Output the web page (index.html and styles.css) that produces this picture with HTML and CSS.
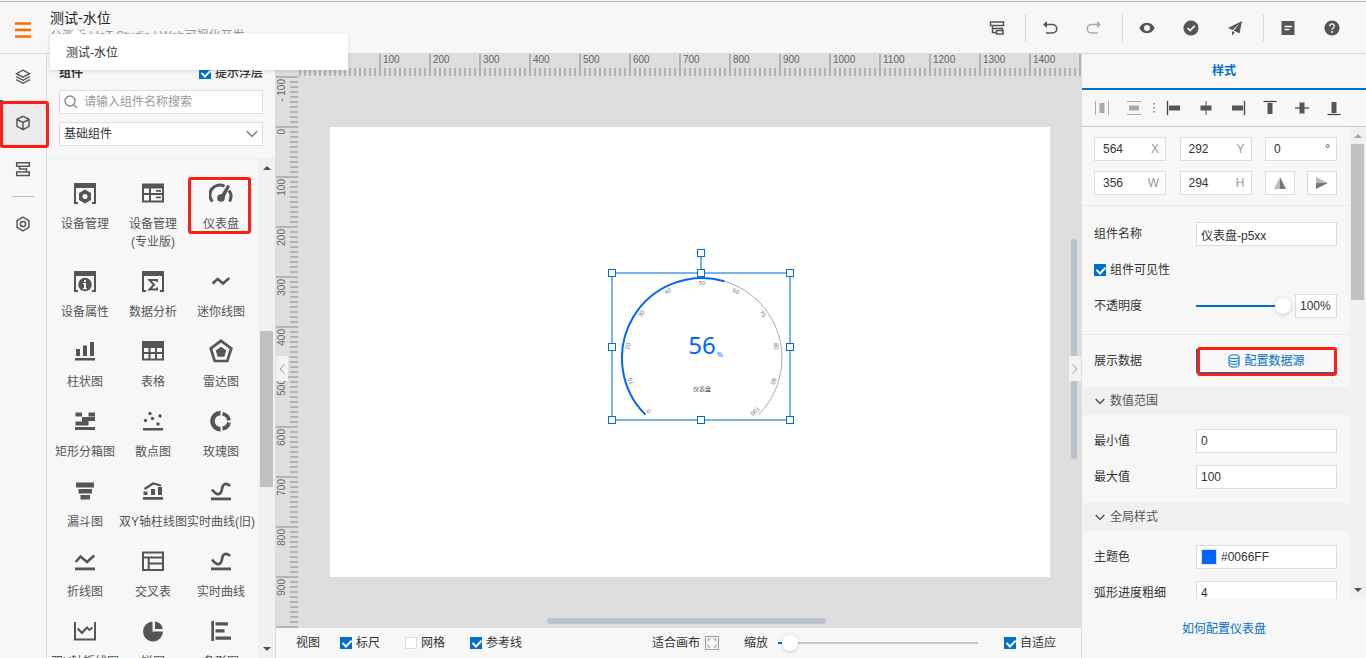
FILE: index.html
```html
<!DOCTYPE html>
<html lang="zh-CN">
<head>
<meta charset="utf-8">
<title>测试-水位</title>
<link rel="stylesheet" href="styles.css">
</head>
<body>
<div class="app">
  <header class="topbar">
    <button class="menu-btn" aria-label="菜单">
      <svg width="16" height="16" viewBox="0 0 16 16"><path d="M0 1.500h16M0 8h16M0 14.500h16" stroke="#ff6a00" stroke-width="2.400"/></svg>
    </button>
    <div class="titles">
      <h1 class="title">测试-水位</h1>
      <p class="subtitle">公测版 | IoT Studio | Web可视化开发</p>
      <div class="tooltip" role="tooltip">测试-水位</div>
    </div>
    <div class="tools">
      <button class="tool" aria-label="结构"><svg class="i16" viewBox="0 0 16 16"><path d="M1.500 2h13v3.500h-13zM7.500 10.500h6.500v3.500h-6.500z" fill="none" stroke="#555" stroke-width="1.500"/><path d="M3.500 5.500v7h4M3.500 8.500h10v2" fill="none" stroke="#555" stroke-width="1.500"/></svg></button>
      <i class="sep"></i>
      <button class="tool" aria-label="撤销"><svg class="i16" viewBox="0 0 16 16"><path d="M2 4.500h8.500a4 4 0 0 1 0 8.500h-6.500" fill="none" stroke="#555" stroke-width="1.700"/><path d="M5 1v7l-4-3.500z" fill="#555"/></svg></button>
      <button class="tool" aria-label="重做"><svg class="i16" viewBox="0 0 16 16"><path d="M14 4.500h-8.500a4 4 0 0 0 0 8.500h6.500" fill="none" stroke="#aaa" stroke-width="1.500"/><path d="M11 1v7l4-3.500z" fill="#aaa"/></svg></button>
      <i class="sep"></i>
      <button class="tool" aria-label="预览"><svg class="i16" viewBox="0 0 16 16"><path fill-rule="evenodd" fill="#555" d="M.3 8C2 4.500 5 2.800 8 2.800S14 4.500 15.700 8C14 11.500 11 13.200 8 13.200S2 11.500.3 8zM8 5a3 3 0 1 0 0 6 3 3 0 0 0 0-6z"/></svg></button>
      <button class="tool" aria-label="检查"><svg class="i16" viewBox="0 0 16 16"><circle cx="8" cy="8" r="7.600" fill="#555"/><path d="M4.500 8l2.600 2.600 4.600-4.800" fill="none" stroke="#f7f7f7" stroke-width="1.700"/></svg></button>
      <button class="tool" aria-label="发布"><svg class="i16" viewBox="0 0 16 16"><path d="M15 1L1 8l4.500 2L13 3 6.800 10.600 12.500 13.500zM5 11v4.500l2.800-3z" fill="#555"/></svg></button>
      <i class="sep"></i>
      <button class="tool" aria-label="文档"><svg class="i16" viewBox="0 0 16 16"><path d="M1.500 1h13v14h-13z" fill="#555"/><path d="M4.500 6.500h7.500M4.500 9.500h5" stroke="#f7f7f7" stroke-width="1.300"/></svg></button>
      <button class="tool" aria-label="帮助"><svg class="i16" viewBox="0 0 16 16"><circle cx="8" cy="8" r="7.600" fill="#555"/><path d="M5.700 6.200a2.300 2.300 0 1 1 3.300 2.100q-1 .5-1 1.500" fill="none" stroke="#f7f7f7" stroke-width="1.400"/><circle cx="8" cy="12" r="1" fill="#f7f7f7"/></svg></button>
    </div>
  </header>

  <div class="main">
    <nav class="rail">
      <button class="rail-btn" aria-label="图层"><svg class="i16" viewBox="0 0 16 16" fill="none" stroke="#555" stroke-width="1.400"><path d="M8 1.200l6.500 3.500L8 8.200 1.500 4.700zM1.200 7.700L8 11.300l6.800-3.600M1.200 10.700L8 14.300l6.800-3.600"/></svg></button>
      <button class="rail-btn active" aria-label="组件"><svg class="i16" viewBox="0 0 16 16" fill="none" stroke="#555" stroke-width="1.400"><path d="M8 1.300l6 3v7l-6 3.400-6-3.400v-7zM2 4.500l6 3 6-3M8 7.500v7"/></svg></button>
      <button class="rail-btn" aria-label="页面"><svg class="i16" viewBox="0 0 16 16" fill="none" stroke="#555" stroke-width="1.500"><path d="M1.700 1.700h12.600v3.500h-12.600zM1.700 11h12.600v3.500h-12.600zM4.500 5.200v2.900h7v2.900"/></svg></button>
      <i class="rail-line"></i>
      <button class="rail-btn" aria-label="设置"><svg class="i16" viewBox="0 0 16 16" fill="none" stroke="#555" stroke-width="1.500"><path d="M8 1.200l5.900 3.400v6.800L8 14.800l-5.900-3.400V4.600z"/><circle cx="8" cy="8" r="2.600"/></svg></button>
    </nav>

    <aside class="library">
      <div class="lib-head">
        <div class="lib-title">
          <h2 class="heading">组件</h2>
          <label class="check strong"><input type="checkbox" class="box" checked>提示浮层</label>
        </div>
        <label class="search">
          <svg class="i16" viewBox="0 0 16 16" fill="none" stroke="#888" stroke-width="1.400"><circle cx="6" cy="7" r="5"/><path d="M9.700 10.700l3.300 3.300"/></svg>
          <input type="text" class="search-input" placeholder="请输入组件名称搜索" aria-label="搜索组件">
        </label>
        <div class="select-wrap">
          <select class="select" aria-label="组件分类"><option>基础组件</option></select>
          <svg class="select-arrow" viewBox="0 0 12 8"><path d="M.7 1l5.300 5.500L11.300 1" fill="none" stroke="#777" stroke-width="1.300"/></svg>
        </div>
      </div>
      <div class="lib-body">
        <div class="grid">
          <button class="item"><svg class="i24" viewBox="0 0 24 24"><path d="M1 2h22v5H1zM1 7h2v14h2v2H1zM23 7h-2v14h-2v2h4z"/><path fill-rule="evenodd" d="M12 8.500l6 3.500v7l-6 3.500L6 19v-7zM12 13a2.400 2.400 0 1 0 0 5 2.400 2.400 0 0 0 0-5z"/></svg>设备管理</button>
          <button class="item"><svg class="i24" viewBox="0 0 24 24"><path fill-rule="evenodd" d="M1 2.500h22v19H1zM3 7.500v4.500h5V7.500zM10 7.500v4.500h11V7.500zM3 14v5.500h5V14zM10 14v5.500h11V14z"/><path d="M15 9h5v1.800h-5zM15 15.500h5v1.800h-5z"/></svg>设备管理<br>(专业版)</button>
          <button class="item marked"><svg class="i24" viewBox="0 0 24 24"><path d="M3.500 20.500A9.800 9.800 0 0 1 15.500 5.300M20 9.500a10 10 0 0 1 .5 11" fill="none" stroke="#555" stroke-width="3"/><path d="M18.500 3.800l2.400 1.400-5.700 12-4-1.800z"/><circle cx="12" cy="17" r="3.800"/></svg>仪表盘</button>
          <button class="item"><svg class="i24" viewBox="0 0 24 24"><path d="M1 2h22v5H1zM1 7h2v14h2v2H1zM23 7h-2v14h-2v2h4z"/><circle cx="12" cy="15.500" r="6.800"/><path d="M11 11h2v2h-2zM10 14h3v5h1v1.200h-4V19h1v-3.800h-1z" fill="#f7f7f7"/></svg>设备属性</button>
          <button class="item"><svg class="i24" viewBox="0 0 24 24"><path d="M1 2h22v5H1zM1 7h2v14h2v2H1zM23 7h-2v14h-2v2h4z"/><path d="M16 13v-2H8.500l4.500 4.700L8.500 20.500H16v-2" fill="none" stroke="#555" stroke-width="2"/></svg>数据分析</button>
          <button class="item"><svg class="i24" viewBox="0 0 24 24"><path d="M3.500 14.500l5.200-4.500 5.300 4.500 6.300-5.500" fill="none" stroke="#555" stroke-width="2.600"/></svg>迷你线图</button>
          <button class="item"><svg class="i24" viewBox="0 0 24 24"><path d="M3 10h4v7H3zM10 6.500h4V17h-4zM17 3h4v14h-4zM2 19h20v2.500H2z"/></svg>柱状图</button>
          <button class="item"><svg class="i24" viewBox="0 0 24 24"><path fill-rule="evenodd" d="M1 2h22v19.500H1zM3 9v4h4.500V9zM9.500 9v4h4.500V9zM16 9v4h5V9zM3 15v4.500h4.500V15zM9.500 15v4.500h4.500V15zM16 15v4.500h5V15z"/></svg>表格</button>
          <button class="item"><svg class="i24" viewBox="0 0 24 24"><path d="M12 1.800l10.300 7.600-4 12.600H5.700l-4-12.600z" fill="none" stroke="#555" stroke-width="2.700"/><path d="M12 7.800l5.300 3.800-2 6.200H8.700l-2-6.200z"/></svg>雷达图</button>
          <button class="item"><svg class="i24" viewBox="0 0 24 24"><path d="M2.500 3.500H9v4H2.500zM15.500 3.500H22v4h-6.500zM9 8h13v4H9zM2.500 12.500H9v4H2.500zM9 12h6.500v4.500H9zM2 18h20v3H2z"/></svg>矩形分箱图</button>
          <button class="item"><svg class="i24" viewBox="0 0 24 24"><circle cx="9" cy="4.500" r="1.700"/><circle cx="4.500" cy="11.500" r="1.700"/><circle cx="11.500" cy="9.500" r="1.700"/><circle cx="19" cy="7" r="1.700"/><circle cx="17" cy="15" r="1.700"/><path d="M2 19h20v2.500H2z"/></svg>散点图</button>
          <button class="item"><svg class="i24" viewBox="0 0 24 24"><path d="M11.500 4a8 8 0 0 0 0 16.200" fill="none" stroke="#555" stroke-width="4.500"/><path d="M13.500 4.800a7.600 7.600 0 0 1 6.500 6.700M20 13.500a7.600 7.600 0 0 1-6.500 6" fill="none" stroke="#555" stroke-width="3.800"/></svg>玫瑰图</button>
          <button class="item"><svg class="i24" viewBox="0 0 24 24"><path d="M3 3.500h18v5H3zM5.500 10h13.500v4.500H5.500zM7.500 16H17v4.500H7.500z"/></svg>漏斗图</button>
          <button class="item"><svg class="i24" viewBox="0 0 24 24"><path d="M2.500 12.500h4V16h-4zM10 10h4v6h-4zM17 8h4v8h-4zM2 18h20v2.800H2z"/><path d="M3.500 10L12 4.500l8 2" fill="none" stroke="#555" stroke-width="2.200"/></svg>双Y轴柱线图</button>
          <button class="item"><svg class="i24" viewBox="0 0 24 24"><path d="M3 10.500c3 4 6 6 8.500 3.500S12 6 16 5q3-.5 5 2" fill="none" stroke="#555" stroke-width="2.700"/><path d="M2 18.500h20v2.800H2z"/></svg>实时曲线(旧)</button>
          <button class="item"><svg class="i24" viewBox="0 0 24 24"><path d="M2.700 13L7.500 7.500l6.500 5.500 7.300-6.500" fill="none" stroke="#555" stroke-width="2.500"/><path d="M2 18.500h20v2.800H2z"/></svg>折线图</button>
          <button class="item"><svg class="i24" viewBox="0 0 24 24"><path d="M2 3.500h20v17.500H2zM2 8.500h20M7.700 8.500V21M7.700 14.500H22" fill="none" stroke="#555" stroke-width="2"/></svg>交叉表</button>
          <button class="item"><svg class="i24" viewBox="0 0 24 24"><path d="M3 10.500c3 4 6 6 8.500 3.500S12 6 16 5q3-.5 5 2" fill="none" stroke="#555" stroke-width="2.700"/><path d="M2 18.500h20v2.800H2z"/></svg>实时曲线</button>
          <button class="item"><svg class="i24" viewBox="0 0 24 24"><path d="M2 3v17.500h20V3M4.700 9.500L9 14l5-5.500 2.500 2.500 3-2.500" fill="none" stroke="#555" stroke-width="2"/></svg>双Y轴折线图</button>
          <button class="item"><svg class="i24" viewBox="0 0 24 24"><path d="M11.500 2.500v10H22a10 10 0 1 1-10.500-10z"/><path d="M14 2.500a8.500 8.500 0 0 1 7.800 7.500H14z"/></svg>饼图</button>
          <button class="item"><svg class="i24" viewBox="0 0 24 24"><path d="M2.300 2H5v20H2.300zM6.500 3.200H19v3.200H6.500zM6.500 10.300h9v3.200h-9zM6.500 17.500H22v3.200H6.500z"/></svg>条形图</button>
        </div>
        <div class="sbar">
          <svg class="sarrow" viewBox="0 0 8 4"><path d="M0 4l4-4 4 4z"/></svg>
          <i class="lib-thumb"></i>
          <svg class="sarrow end" viewBox="0 0 8 4"><path d="M0 0l4 4 4-4z"/></svg>
        </div>
      </div>
    </aside>

    <main class="work">
      <div class="stage">
        <div class="ruler-x">
          <i class="rx first"></i><i class="rx">0</i><i class="rx">100</i><i class="rx">200</i><i class="rx">300</i><i class="rx">400</i><i class="rx">500</i><i class="rx">600</i><i class="rx">700</i><i class="rx">800</i><i class="rx">900</i><i class="rx">1000</i><i class="rx">1100</i><i class="rx">1200</i><i class="rx">1300</i><i class="rx">1400</i><i class="rx"></i>
        </div>
        <div class="stage-row">
          <div class="ruler-y">
            <i class="ry"><span class="rl">- 100</span></i><i class="ry"><span class="rl">0</span></i><i class="ry"><span class="rl">100</span></i><i class="ry"><span class="rl">200</span></i><i class="ry"><span class="rl">300</span></i><i class="ry"><span class="rl">400</span></i><i class="ry"><span class="rl">500</span></i><i class="ry"><span class="rl">600</span></i><i class="ry"><span class="rl">700</span></i><i class="ry"><span class="rl">800</span></i><i class="ry"><span class="rl">900</span></i><i class="ry"></i>
          </div>
          <div class="page">
            <div class="widget">
              <svg class="gauge" viewBox="0 0 178 147">
                <path d="M33.400 141.600A80 80 0 1 1 146.600 141.600" fill="none" stroke="#aaa" stroke-width="1"/>
                <path d="M33.400 141.600A80 80 0 0 1 112.300 8.200" fill="none" stroke="#0066ff" stroke-width="2"/>
                <g class="scale">
                  <text x="90" y="12" transform="rotate(-135 90 85)">0</text>
                  <text x="90" y="12" transform="rotate(-108 90 85)">10</text>
                  <text x="90" y="12" transform="rotate(-81 90 85)">20</text>
                  <text x="90" y="12" transform="rotate(-54 90 85)">30</text>
                  <text x="90" y="12" transform="rotate(-27 90 85)">40</text>
                  <text x="90" y="12">50</text>
                  <text x="90" y="12" transform="rotate(27 90 85)">60</text>
                  <text x="90" y="12" transform="rotate(54 90 85)">70</text>
                  <text x="90" y="12" transform="rotate(81 90 85)">80</text>
                  <text x="90" y="12" transform="rotate(108 90 85)">90</text>
                  <text x="90" y="12" transform="rotate(135 90 85)">100</text>
                </g>
                <text class="value" x="90" y="81">56</text>
                <text class="unit" x="108" y="84">%</text>
                <text class="name" x="90" y="118">仪表盘</text>
              </svg>
              <i class="stem"></i>
              <i class="h rot"></i><i class="h t l"></i><i class="h t c"></i><i class="h t r"></i><i class="h m l"></i><i class="h m r"></i><i class="h b l"></i><i class="h b c"></i><i class="h b r"></i>
            </div>
          </div>
        </div>
        <i class="hbar"></i>
        <i class="vbar"></i>
        <button class="fold left" aria-label="收起组件"><svg viewBox="0 0 6 10" class="fold-icon"><path d="M5.500.5L1 5l4.500 4.500" fill="none" stroke="#999"/></svg></button>
        <button class="fold right" aria-label="收起样式"><svg viewBox="0 0 6 10" class="fold-icon"><path d="M.5.5L5 5 .5 9.500" fill="none" stroke="#999"/></svg></button>
      </div>
      <div class="statusbar">
        <span class="view-label">视图</span>
        <label class="check"><input type="checkbox" class="box" checked>标尺</label>
        <label class="check"><input type="checkbox" class="box">网格</label>
        <label class="check"><input type="checkbox" class="box" checked>参考线</label>
        <button class="fit">适合画布<svg width="14" height="14" viewBox="0 0 14 14" fill="none" stroke="#999"><path d="M.5.500h13v13H.5z"/><path d="M3 5.500V3h2.500M8.500 3H11v2.500M11 8.500V11H8.500M5.500 11H3V8.500"/></svg></button>
        <label class="zoom">缩放<input type="range" class="range zoom-range" min="0" max="100" value="2"></label>
        <label class="check last"><input type="checkbox" class="box" checked>自适应</label>
      </div>
    </main>

    <aside class="props">
      <div class="tabs"><button class="tab">样式</button></div>
      <div class="align">
        <button class="al" aria-label="水平分布"><svg class="i16" viewBox="0 0 16 16"><path d="M1.500 1v14M14.500 1v14" stroke="#aaa"/><path d="M5.500 3h5v10h-5z" fill="#aaa"/></svg></button>
        <button class="al" aria-label="垂直分布"><svg class="i16" viewBox="0 0 16 16"><path d="M1 1.500h14M1 14.500h14" stroke="#aaa"/><path d="M3 5.500h10v5H3z" fill="#aaa"/></svg></button>
        <svg class="dots" viewBox="0 0 8 12"><path d="M4 1v11" stroke="#999" stroke-width="2" stroke-dasharray="1.500 2.500"/></svg>
        <button class="al" aria-label="左对齐"><svg class="i16" viewBox="0 0 16 16"><path d="M1.500 1v14" stroke="#444" stroke-width="1.300"/><path d="M3 5.500h11v5H3z" fill="#555"/></svg></button>
        <button class="al" aria-label="水平居中"><svg class="i16" viewBox="0 0 16 16"><path d="M8 1v14" stroke="#777" stroke-width="1.300"/><path d="M2.500 5.500h11v5h-11z" fill="#555"/></svg></button>
        <button class="al" aria-label="右对齐"><svg class="i16" viewBox="0 0 16 16"><path d="M14.500 1v14" stroke="#444" stroke-width="1.300"/><path d="M2 5.500h11v5H2z" fill="#555"/></svg></button>
        <button class="al" aria-label="顶对齐"><svg class="i16" viewBox="0 0 16 16"><path d="M1.500 1.500h13" stroke="#444" stroke-width="1.300"/><path d="M5.500 3h5v11h-5z" fill="#555"/></svg></button>
        <button class="al" aria-label="垂直居中"><svg class="i16" viewBox="0 0 16 16"><path d="M1 8h14" stroke="#888" stroke-width="2"/><path d="M5.500 2.500h5v11h-5z" fill="#555"/></svg></button>
        <button class="al" aria-label="底对齐"><svg class="i16" viewBox="0 0 16 16"><path d="M1.500 14.500h13" stroke="#444" stroke-width="1.300"/><path d="M5.500 2h5v11h-5z" fill="#555"/></svg></button>
      </div>
      <div class="props-body">
        <form class="form">
          <section class="geo">
            <label class="field"><input type="text" class="num" value="564"><span class="suffix">X</span></label>
            <label class="field"><input type="text" class="num" value="292"><span class="suffix">Y</span></label>
            <label class="field"><input type="text" class="num" value="0"><span class="suffix dark">°</span></label>
            <label class="field"><input type="text" class="num" value="356"><span class="suffix">W</span></label>
            <label class="field"><input type="text" class="num" value="294"><span class="suffix">H</span></label>
            <div class="flips">
              <button type="button" class="flip" aria-label="水平翻转"><svg width="12" height="12" viewBox="0 0 12 12"><path d="M6 0v12H0z" fill="#bbb"/><path d="M6 0v12h6z" fill="#777"/></svg></button>
              <button type="button" class="flip" aria-label="垂直翻转"><svg width="12" height="12" viewBox="0 0 12 12"><path d="M0 0v6h12z" fill="#bbb"/><path d="M0 12V6h12z" fill="#777"/></svg></button>
            </div>
          </section>
          <section class="group lined">
            <div class="row"><label class="lbl" for="f-name">组件名称</label><input id="f-name" type="text" class="text" value="仪表盘-p5xx"></div>
            <div class="row"><label class="check"><input type="checkbox" class="box" checked>组件可见性</label></div>
            <div class="row"><label class="lbl" for="f-op">不透明度</label><input id="f-op" type="range" class="range op-range" value="100"><input type="text" class="text pct" value="100%" aria-label="不透明度数值"></div>
          </section>
          <section class="group">
            <div class="row"><span class="lbl">展示数据</span><button type="button" class="source"><svg width="12" height="14" viewBox="0 0 12 14" fill="none" stroke="#0070cc"><ellipse cx="6" cy="2.800" rx="5" ry="2"/><path d="M1 2.800v8.400c0 2.600 10 2.600 10 0V2.800M1 5.600c0 2.600 10 2.600 10 0M1 8.400c0 2.600 10 2.600 10 0"/></svg>配置数据源</button></div>
          </section>
          <h3 class="fold-head"><svg width="10" height="7" viewBox="0 0 10 7"><path d="M.7 1L5 5.500 9.300 1" fill="none" stroke="#555" stroke-width="1.500"/></svg>数值范围</h3>
          <section class="group">
            <div class="row"><label class="lbl" for="f-min">最小值</label><input id="f-min" type="text" class="text" value="0"></div>
            <div class="row"><label class="lbl" for="f-max">最大值</label><input id="f-max" type="text" class="text" value="100"></div>
          </section>
          <h3 class="fold-head"><svg width="10" height="7" viewBox="0 0 10 7"><path d="M.7 1L5 5.500 9.300 1" fill="none" stroke="#555" stroke-width="1.500"/></svg>全局样式</h3>
          <section class="group">
            <div class="row"><label class="lbl" for="f-color">主题色</label><div class="color"><i class="swatch"></i><input id="f-color" type="text" class="color-input" value="#0066FF"></div></div>
            <div class="row"><label class="lbl" for="f-arc">弧形进度粗细</label><input id="f-arc" type="text" class="text" value="4"></div>
          </section>
        </form>
        <div class="sbar">
          <svg class="sarrow dim" viewBox="0 0 8 4"><path d="M0 4l4-4 4 4z"/></svg>
          <i class="props-thumb"></i>
          <svg class="sarrow end" viewBox="0 0 8 4"><path d="M0 0l4 4 4-4z"/></svg>
        </div>
      </div>
      <footer class="help"><a class="help-link" href="#">如何配置仪表盘</a></footer>
    </aside>
  </div>
</div>
</body>
</html>
```

FILE: styles.css
```css
* { box-sizing: border-box; }
body { margin: 0; }
body, button, input, select {
  font-family: "Liberation Sans", "Noto Sans CJK SC", sans-serif;
  font-size: 12px;
  line-height: 18px;
  color: #333;
}
button { padding: 0; border: 0; background: none; }
input { margin: 0; outline: 0; }
h1, h2, h3, p { margin: 0; }
i { font-style: normal; }
svg { display: block; flex: none; }
.i16 { width: 16px; height: 16px; }
.i24 { width: 24px; height: 24px; fill: #555; }

.app {
  display: flex;
  flex-direction: column;
  height: 100vh;
  overflow: hidden;
  padding-top: 1px;
  background: #f7f7f7;
}

/* top bar */
.topbar {
  display: flex;
  flex: none;
  height: 53px;
  padding: 0 12px 0 15px;
  border-top: 1px solid #b3b3b3;
  border-bottom: 1px solid #d9d9d9;
}
.menu-btn { width: 16px; margin-right: 19px; display: flex; align-items: center; height: 56px; }
.titles { position: relative; padding-top: 6px; white-space: nowrap; }
.title { font-size: 14px; line-height: 20px; font-weight: 400; color: #222; }
.subtitle { line-height: 16px; color: #999; }
.tooltip {
  position: absolute;
  z-index: 10;
  left: 0;
  top: 32px;
  width: 298px;
  padding: 10px 16px 8px;
  background: #fff;
  box-shadow: 0 1px 4px rgba(0, 0, 0, .14);
}
.tooltip::before {
  content: "";
  position: absolute;
  left: 20px;
  top: -6px;
  border: 6px solid transparent;
  border-top-width: 0;
  border-bottom-color: #fff;
}
.tools { display: flex; align-items: center; margin-left: auto; }
.tool { display: flex; justify-content: center; align-items: center; width: 44px; height: 44px; }
.sep { width: 1px; height: 28px; margin: 0 2px 0 6px; background: #d9d9d9; }

.main { display: flex; flex: 1; min-height: 0; }

/* left rail */
.rail { flex: none; width: 47px; border-right: 1px solid #ddd; }
.rail-btn { position: relative; display: flex; justify-content: center; align-items: center; width: 46px; height: 46px; }
.rail-btn.active { background: #ebebeb; border-left: 3px solid #0070cc; padding-right: 3px; }
.rail-btn.active::after {
  content: "";
  position: absolute;
  z-index: 5;
  inset: 1px -3px -2px -3px;
  border: 3px solid #ff1e12;
  border-radius: 3px;
}
.rail-line { display: block; height: 1px; margin: 4px 12px; background: #bbb; }

/* component library */
.library { display: flex; flex-direction: column; flex: none; width: 228px; }
.lib-head { display: flex; flex-direction: column; gap: 8px; padding: 10px 12px 12px; border-bottom: 1px solid #ededed; }
.lib-title { display: flex; justify-content: space-between; align-items: center; }
.heading { font-size: 12px; line-height: 18px; font-weight: 700; }
.strong { font-weight: 500; }
.check { display: flex; align-items: center; gap: 4px; white-space: nowrap; }
.box {
  appearance: none;
  position: relative;
  flex: none;
  width: 12px;
  height: 12px;
  border: 1px solid #ddd;
  background: #fff;
}
.box:checked { border-color: #0070cc; background: #0070cc; }
.box:checked::after {
  content: "";
  position: absolute;
  left: 3px;
  top: 0;
  width: 4px;
  height: 7px;
  border: solid #fff;
  border-width: 0 2px 2px 0;
  transform: rotate(45deg);
}
.search { display: flex; align-items: center; gap: 4px; height: 24px; padding: 0 4px; border: 1px solid #ddd; background: #fff; }
.search-input { flex: 1; min-width: 0; padding: 0; border: 0; background: none; }
.search-input::placeholder { color: #999; }
.select-wrap { position: relative; }
.select { display: block; appearance: none; width: 100%; height: 24px; padding: 0 4px; border: 1px solid #ddd; border-radius: 0; background: #fff; }
.select-arrow { position: absolute; right: 5px; top: 8px; width: 12px; height: 8px; pointer-events: none; }
.lib-body { display: flex; flex: 1; min-height: 0; overflow: hidden; }
.grid {
  display: grid;
  grid-template-columns: repeat(3, 68px);
  align-content: start;
  row-gap: 18px;
  flex: 1;
  padding: 22px 3px 0 4px;
}
.item {
  position: relative;
  display: flex;
  flex-direction: column;
  align-items: center;
  align-self: start;
  color: #555;
  white-space: nowrap;
}
.item .i24 { margin-bottom: 10px; }
.marked::after {
  content: "";
  position: absolute;
  inset: -4px 4px -1px 1px;
  border: 3px solid #ff1e12;
  border-radius: 3px;
}
.sbar { display: flex; flex-direction: column; align-items: center; flex: none; width: 17px; padding: 7px 0; background: #f1f1f1; }
.sarrow { width: 8px; height: 4px; fill: #505050; }
.sarrow.dim { fill: #a3a3a3; }
.sarrow.end { margin-top: auto; }
.lib-thumb { width: 13px; height: 156px; margin-top: 161px; background: #c1c1c1; }
.props-thumb { width: 13px; height: 156px; margin-top: 6px; background: #c1c1c1; }

/* workspace */
.work { display: flex; flex-direction: column; flex: 1; min-width: 0; padding-left: 1px; background: #ddd; }
.stage { position: relative; display: flex; flex-direction: column; flex: 1; min-height: 0; overflow: hidden; background: #dedede; }
.ruler-x {
  display: flex;
  flex: none;
  height: 22px;
  margin-left: 23px;
  overflow: hidden;
  background: repeating-linear-gradient(90deg, #b3b3b3 0 2px, transparent 2px 5px) left bottom / 100% 8px no-repeat;
}
.rx { flex: none; width: 50px; height: 22px; padding-left: 2px; border-left: 2px solid #b3b3b3; font-size: 10px; line-height: 12px; color: #666; }
.rx.first { width: 30px; border: 0; }
.stage-row { display: flex; flex: 1; min-height: 0; }
.ruler-y {
  flex: none;
  width: 22px;
  overflow: hidden;
  background: repeating-linear-gradient(180deg, #b3b3b3 0 2px, transparent 2px 5px) right top / 8px 100% no-repeat;
}
.ry { display: block; height: 50px; padding-top: 1px; border-top: 2px solid #b3b3b3; font-size: 10px; line-height: 12px; color: #666; }
.rl { display: block; width: 12px; writing-mode: vertical-rl; transform: rotate(180deg); }
.page { position: relative; flex: none; width: 720px; height: 450px; margin: 51px 0 0 32px; background: #fff; }
.widget { position: absolute; left: 281px; top: 145px; width: 180px; height: 149px; border: 2px solid #7ab5e8; }
.gauge { position: absolute; left: -1px; top: -1px; width: 178px; height: 147px; }
.scale { font: 6px "Noto Sans", sans-serif; fill: #777; text-anchor: middle; }
.value { font: 24px "Noto Sans", sans-serif; fill: #0066ff; text-anchor: middle; }
.unit { font: 7px "Noto Sans", sans-serif; fill: #0066ff; text-anchor: middle; }
.name { font-size: 6px; fill: #444; text-anchor: middle; }
.stem { position: absolute; left: 87px; top: -17px; width: 2px; height: 12px; background: #7ab5e8; }
.h { position: absolute; width: 8px; height: 8px; border: 1px solid #0070cc; background: #fff; }
.t { top: -5px; }
.m { top: 69px; }
.b { bottom: -5px; }
.l { left: -5px; }
.c { left: 84px; }
.r { right: -5px; }
.rot { left: 84px; top: -25px; }
.hbar { position: absolute; left: 271px; bottom: 4px; width: 279px; height: 6px; border-radius: 3px; background: #bac3cc; }
.vbar { position: absolute; right: 4px; top: 185px; width: 6px; height: 220px; border-radius: 3px; background: #bac3cc; }
.fold { position: absolute; top: 302px; display: flex; justify-content: center; align-items: center; width: 12px; height: 25px; background: #f2f2f2; }
.fold.left { left: 0; }
.fold.right { right: 0; }
.fold-icon { width: 6px; height: 10px; }

.statusbar { display: flex; align-items: center; flex: none; height: 30px; padding: 0 25px 0 20px; background: #f7f7f7; white-space: nowrap; }
.statusbar .check { margin-right: 25px; }
.statusbar .check.last { margin: 0 0 0 26px; }
.view-label { margin-right: 20px; }
.fit { display: flex; align-items: center; gap: 5px; margin-left: auto; }
.zoom { display: flex; align-items: center; gap: 10px; margin-left: 25px; }
.range { appearance: none; height: 16px; background: none; }
.range::-webkit-slider-runnable-track { height: 2px; background: #c8c8c8; }
.range::-webkit-slider-thumb {
  appearance: none;
  width: 16px;
  height: 16px;
  margin-top: -7px;
  border-radius: 50%;
  background: #fff;
  box-shadow: 0 1px 4px rgba(0, 0, 0, .18);
}
.zoom-range { width: 200px; }
.zoom-range::-webkit-slider-runnable-track { background: linear-gradient(90deg, #0070cc 4%, #c8c8c8 4%); }
.op-range { flex: 1; min-width: 0; margin-right: 4px; }
.op-range::-webkit-slider-runnable-track { background: #0070cc; }

/* style panel */
.props { display: flex; flex-direction: column; flex: none; width: 285px; border-left: 1px solid #ddd; }
.tabs { flex: none; border-bottom: 2px solid #0070cc; }
.tab { display: block; width: 100%; height: 34px; font-weight: 700; color: #0070cc; }
.align { display: flex; align-items: center; flex: none; height: 37px; padding-left: 4px; border-bottom: 1px solid #c8c8c8; }
.al { display: flex; justify-content: center; width: 32px; }
.dots { width: 8px; height: 12px; }
.props-body { display: flex; flex: 1; min-height: 0; overflow: hidden; }
.form { flex: 1; min-width: 0; }
.geo { display: grid; grid-template-columns: repeat(3, 72px); justify-content: space-between; gap: 10px 0; padding: 10px 12px; }
.field { display: flex; align-items: center; height: 24px; padding: 0 6px 0 8px; border: 1px solid #ddd; background: #fff; }
.num { flex: 1; min-width: 0; padding: 0; border: 0; background: none; }
.suffix { color: #999; }
.suffix.dark { color: #333; }
.flips { display: flex; justify-content: space-between; }
.flip { display: flex; justify-content: center; align-items: center; width: 30px; height: 24px; border: 1px solid #ddd; background: #fff; }
.group { display: flex; flex-direction: column; gap: 12px; padding: 14px 12px; }
.lined { padding: 16px 12px; border: solid #e8e8e8; border-width: 1px 0; }
.row { display: flex; align-items: center; height: 24px; }
.lbl { flex: none; width: 102px; }
.text { flex: 1; min-width: 0; height: 24px; padding: 0 4px; border: 1px solid #ddd; background: #fff; }
.pct { flex: none; width: 42px; }
.source {
  position: relative;
  display: flex;
  flex: 1;
  justify-content: center;
  align-items: center;
  gap: 4px;
  height: 24px;
  border: 1px solid #0070cc;
  background: #f7f7f7;
  color: #0070cc;
}
.source::after {
  content: "";
  position: absolute;
  inset: -3px -1px -4px 0;
  border: 3px solid #ff1e12;
  border-radius: 3px;
}
.fold-head { display: flex; align-items: center; gap: 5px; height: 28px; padding-left: 13px; background: #f0f0f0; font-size: 12px; font-weight: 400; color: #555; }
.color { display: flex; align-items: center; flex: 1; min-width: 0; gap: 4px; height: 24px; padding: 0 4px; border: 1px solid #ddd; background: #fff; }
.swatch { flex: none; width: 16px; height: 16px; border: 1px solid #ddd; background: #0066ff; }
.color-input { flex: 1; min-width: 0; width: 100%; padding: 0; border: 0; background: none; }
.help { display: flex; justify-content: center; align-items: center; flex: none; height: 59px; }
.help-link { color: #0070cc; text-decoration: none; }
```
